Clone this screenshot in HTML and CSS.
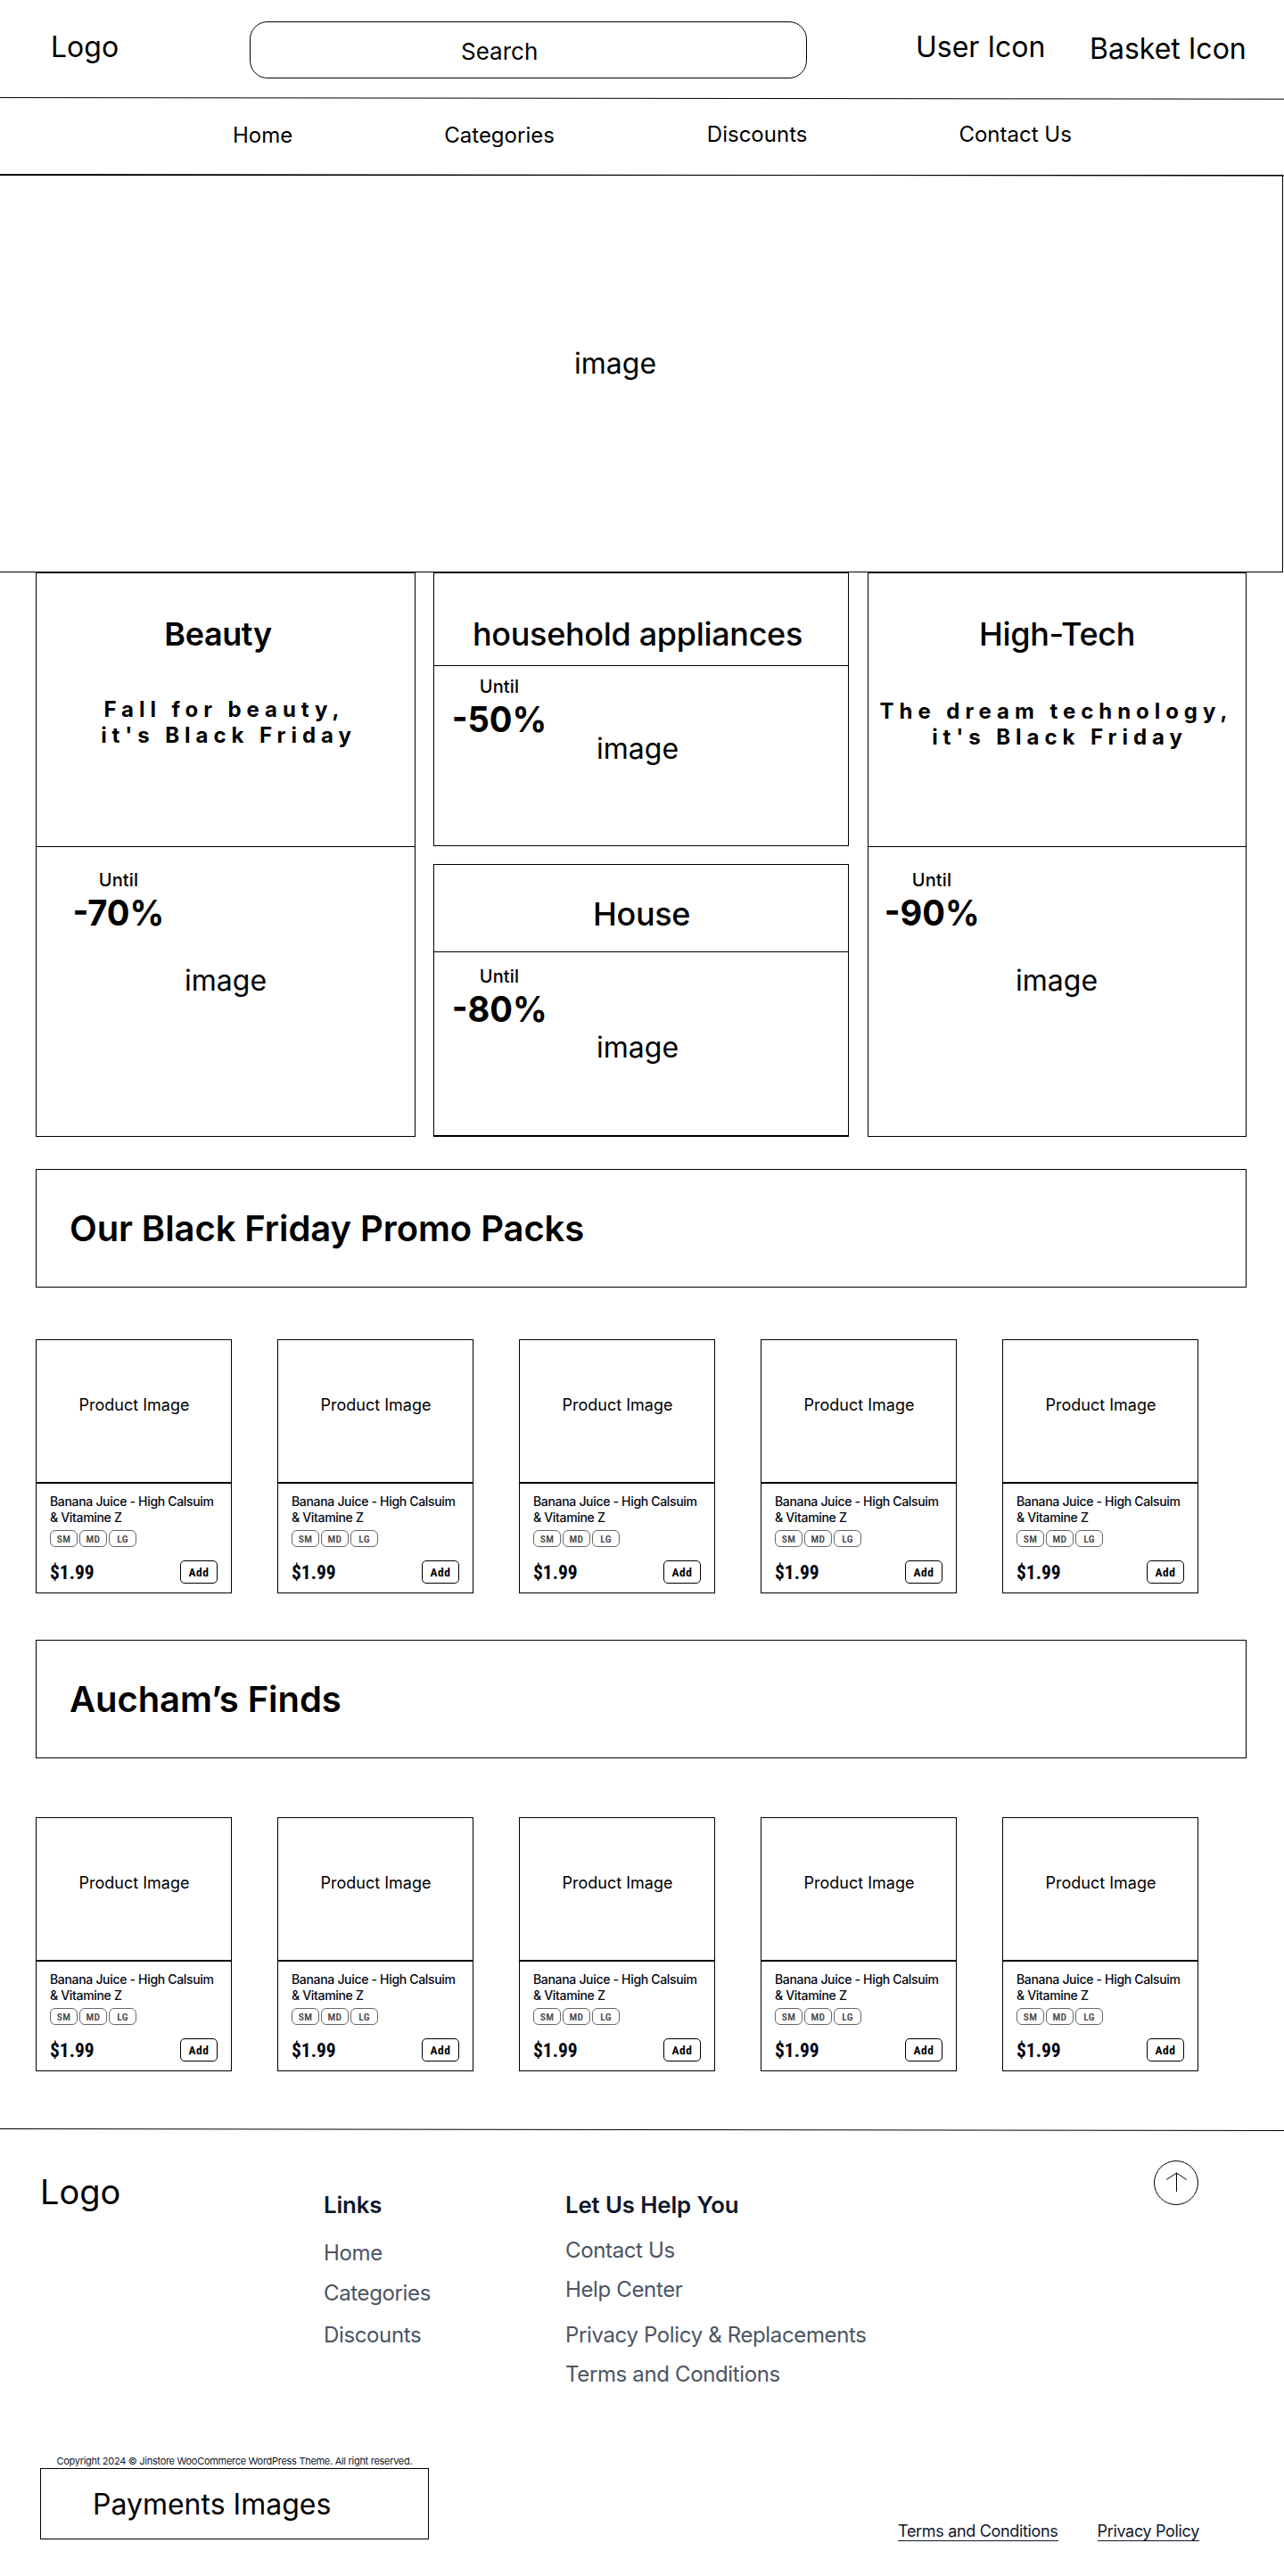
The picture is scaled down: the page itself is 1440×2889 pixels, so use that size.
FILE: index.html
```
<!DOCTYPE html>
<html lang="en">
<head>
<meta charset="utf-8">
<title>Black Friday Store</title>
<link rel="stylesheet" href="styles.css">
</head>
<body>
<header class="topbar">
  <div class="topbar-logo">Logo</div>
  <div class="search">Search</div>
  <div class="topbar-user">User Icon</div>
  <div class="topbar-basket">Basket Icon</div>
</header>
<svg class="rule" viewBox="0 0 1440 3" width="1440" height="3"><path d="M0 .5L1440 2.17" stroke="#000"/></svg>
<nav class="nav">
  <a class="nav-home">Home</a>
  <a class="nav-categories">Categories</a>
  <a class="nav-discounts">Discounts</a>
  <a class="nav-contact">Contact Us</a>
</nav>
<svg class="rule" viewBox="0 0 1440 3" width="1440" height="3"><path d="M0 .5L1440 2.1" stroke="#000"/></svg>
<section class="hero"><span>image</span></section>

<main class="main">
  <section class="promos">
    <article class="promo promo-side promo-beauty">
      <div class="promo-head">
        <h2 class="promo-title promo-title-bold">Beauty</h2>
        <p class="tagline"><span>Fall for beauty,</span><span>it's Black Friday</span></p>
      </div>
      <div class="promo-body">
        <div class="deal"><span class="until">Until</span><strong class="percent">-70%</strong></div>
        <span class="placeholder">image</span>
      </div>
    </article>
    <div class="promo-column">
      <article class="promo promo-appliances">
        <div class="promo-head"><h2 class="promo-title">household appliances</h2></div>
        <div class="promo-body">
          <div class="deal"><span class="until">Until</span><strong class="percent">-50%</strong></div>
          <span class="placeholder">image</span>
        </div>
      </article>
      <article class="promo promo-house">
        <div class="promo-head"><h2 class="promo-title">House</h2></div>
        <div class="promo-body">
          <div class="deal"><span class="until">Until</span><strong class="percent">-80%</strong></div>
          <span class="placeholder">image</span>
        </div>
      </article>
    </div>
    <article class="promo promo-side promo-tech">
      <div class="promo-head">
        <h2 class="promo-title">High-Tech</h2>
        <p class="tagline"><span>The dream technology,</span><span>it's Black Friday</span></p>
      </div>
      <div class="promo-body">
        <div class="deal"><span class="until">Until</span><strong class="percent">-90%</strong></div>
        <span class="placeholder">image</span>
      </div>
    </article>
  </section>

  <h2 class="section-title">Our Black Friday Promo Packs</h2>
  <section class="products products-packs">
    <article class="product"><div class="product-image">Product Image</div><div class="product-info"><h3 class="product-name">Banana Juice - High Calsuim<br>&amp; Vitamine Z</h3><div class="sizes"><span class="size">SM</span><span class="size">MD</span><span class="size">LG</span></div><div class="buy"><span class="price">$1.99</span><button class="add">Add</button></div></div></article>
    <article class="product"><div class="product-image">Product Image</div><div class="product-info"><h3 class="product-name">Banana Juice - High Calsuim<br>&amp; Vitamine Z</h3><div class="sizes"><span class="size">SM</span><span class="size">MD</span><span class="size">LG</span></div><div class="buy"><span class="price">$1.99</span><button class="add">Add</button></div></div></article>
    <article class="product"><div class="product-image">Product Image</div><div class="product-info"><h3 class="product-name">Banana Juice - High Calsuim<br>&amp; Vitamine Z</h3><div class="sizes"><span class="size">SM</span><span class="size">MD</span><span class="size">LG</span></div><div class="buy"><span class="price">$1.99</span><button class="add">Add</button></div></div></article>
    <article class="product"><div class="product-image">Product Image</div><div class="product-info"><h3 class="product-name">Banana Juice - High Calsuim<br>&amp; Vitamine Z</h3><div class="sizes"><span class="size">SM</span><span class="size">MD</span><span class="size">LG</span></div><div class="buy"><span class="price">$1.99</span><button class="add">Add</button></div></div></article>
    <article class="product"><div class="product-image">Product Image</div><div class="product-info"><h3 class="product-name">Banana Juice - High Calsuim<br>&amp; Vitamine Z</h3><div class="sizes"><span class="size">SM</span><span class="size">MD</span><span class="size">LG</span></div><div class="buy"><span class="price">$1.99</span><button class="add">Add</button></div></div></article>
  </section>

  <h2 class="section-title">Aucham’s Finds</h2>
  <section class="products products-finds">
    <article class="product"><div class="product-image">Product Image</div><div class="product-info"><h3 class="product-name">Banana Juice - High Calsuim<br>&amp; Vitamine Z</h3><div class="sizes"><span class="size">SM</span><span class="size">MD</span><span class="size">LG</span></div><div class="buy"><span class="price">$1.99</span><button class="add">Add</button></div></div></article>
    <article class="product"><div class="product-image">Product Image</div><div class="product-info"><h3 class="product-name">Banana Juice - High Calsuim<br>&amp; Vitamine Z</h3><div class="sizes"><span class="size">SM</span><span class="size">MD</span><span class="size">LG</span></div><div class="buy"><span class="price">$1.99</span><button class="add">Add</button></div></div></article>
    <article class="product"><div class="product-image">Product Image</div><div class="product-info"><h3 class="product-name">Banana Juice - High Calsuim<br>&amp; Vitamine Z</h3><div class="sizes"><span class="size">SM</span><span class="size">MD</span><span class="size">LG</span></div><div class="buy"><span class="price">$1.99</span><button class="add">Add</button></div></div></article>
    <article class="product"><div class="product-image">Product Image</div><div class="product-info"><h3 class="product-name">Banana Juice - High Calsuim<br>&amp; Vitamine Z</h3><div class="sizes"><span class="size">SM</span><span class="size">MD</span><span class="size">LG</span></div><div class="buy"><span class="price">$1.99</span><button class="add">Add</button></div></div></article>
    <article class="product"><div class="product-image">Product Image</div><div class="product-info"><h3 class="product-name">Banana Juice - High Calsuim<br>&amp; Vitamine Z</h3><div class="sizes"><span class="size">SM</span><span class="size">MD</span><span class="size">LG</span></div><div class="buy"><span class="price">$1.99</span><button class="add">Add</button></div></div></article>
  </section>
</main>

<svg class="rule" viewBox="0 0 1440 3" width="1440" height="3"><path d="M0 .5L1440 2.5" stroke="#000"/></svg>
<footer class="footer">
  <div class="footer-top">
    <div class="footer-logo">Logo</div>
    <div class="footer-col footer-links">
      <h4 class="footer-title">Links</h4>
      <a>Home</a><a>Categories</a><a>Discounts</a>
    </div>
    <div class="footer-col footer-help">
      <h4 class="footer-title">Let Us Help You</h4>
      <a>Contact Us</a><a>Help Center</a><a>Privacy Policy &amp; Replacements</a><a>Terms and Conditions</a>
    </div>
    <svg class="to-top" viewBox="0 0 50 50" width="50" height="50" fill="none" stroke="#000"><circle cx="25" cy="25" r="24.5"/><path d="M25.5 35V14M14.2 21.5L25.5 14L36.8 21.5"/></svg>
  </div>
  <div class="footer-bottom">
    <div class="footer-legal">
      <p class="copyright">Copyright 2024 © Jinstore WooCommerce WordPress Theme. All right reserved.</p>
      <div class="payments">Payments Images</div>
    </div>
    <div class="policy-links"><a>Terms and Conditions</a><a>Privacy Policy</a></div>
  </div>
</footer>
</body>
</html>
```
FILE: styles.css
```
* { box-sizing: border-box; }
body { margin: 0; width: 1440px; background: #fff; color: #000; font: 400 32px/39px Inter, "Liberation Sans", sans-serif; }
h2, h3, h4, p { margin: 0; font-weight: inherit; }
.rule { display: block; }

/* Header */
.topbar { display: grid; grid-template-columns: 223px 625px 195px auto; align-items: start; height: 109px; padding: 24px 0 0 57px; }
.topbar-logo, .topbar-user { padding-top: 9px; }
.topbar-user { padding-left: 122px; white-space: nowrap; }
.topbar-basket { padding: 11px 0 0 122px; white-space: nowrap; }
.search { height: 64px; border: 1px solid #000; border-radius: 20px; font-size: 26px; line-height: 31px; padding: 17px 0 0 236px; }
.nav { display: flex; height: 83px; padding: 24px 0 0 261px; font-size: 24px; line-height: 29px; }
.nav a { margin-top: 1px; }
.nav-categories { margin-left: 170px; }
.nav a.nav-discounts { margin: 0 0 0 171px; }
.nav a.nav-contact { margin: 0 0 0 170px; }
.hero { width: 1439px; height: 446px; margin-top: -2px; border: 1px solid #000; border-left: 0; padding: 191px 0 0 644px; }

/* Promo tiles */
.main { padding: 0 42px 0 40px; }
.promos { display: flex; gap: 20px; height: 633px; }
.promo { border: 1px solid #000; display: flex; flex-direction: column; }
.promo-head { border-bottom: 1px solid #000; }
.promo-beauty { width: 426px; }
.promo-tech { width: 425px; margin-left: 1px; }
.promo-column { width: 466px; display: flex; flex-direction: column; gap: 20px; }
.promo-title { font-size: 36px; line-height: 43px; font-weight: 500; letter-spacing: -0.32px; }
.promo-title-bold { font-weight: 600; letter-spacing: -0.4px; }
.promo-side .promo-head { height: 307px; padding-top: 47px; }
.promo-side .promo-title { text-align: center; }
.promo-beauty .promo-title { padding-right: 17px; }
.tagline { font-size: 24px; line-height: 29px; font-weight: 700; letter-spacing: 5.95px; text-align: center; white-space: nowrap; padding-top: 48px; }
.tagline span { display: block; }
.promo-beauty .tagline span:first-child { padding-right: 3px; }
.promo-beauty .tagline span:last-child { padding-left: 7px; }
.promo-tech .tagline { padding: 50px 2px 0 0; }
.promo-tech .tagline span:last-child { padding-left: 8px; }
.promo-body { display: flex; align-items: flex-start; }
.deal { display: flex; flex-direction: column; align-items: center; width: 108px; }
.until { font-size: 20px; line-height: 24px; font-weight: 500; letter-spacing: 0.2px; }
.percent { margin-top: 1px; font-size: 40px; line-height: 48px; font-weight: 700; transform: scaleX(0.953); }
.promo-side .deal { margin: 25px 0 0 38px; }
.promo-tech .deal { margin-left: 17px; }
.promo-side .placeholder { margin: 130px 0 0 20px; }
.promo-tech .placeholder { margin-left: 40px; }
.promo-appliances { height: 307px; }
.promo-appliances .promo-head { height: 104px; padding: 47px 0 0 43px; }
.promo-appliances .deal { margin: 11px 0 0 19px; }
.promo-appliances .placeholder { margin: 73px 0 0 55px; }
.promo-house { height: 306px; border-bottom-width: 2px; }
.promo-house .promo-head { height: 98px; padding: 34px 0 0 178px; }
.promo-house .deal { margin: 15px 0 0 19px; }
.promo-house .placeholder { margin: 87px 0 0 55px; }

/* Product rows */
.section-title { height: 133px; margin-top: 36px; border: 1px solid #000; padding: 42px 0 0 37px; font-size: 40px; line-height: 48px; font-weight: 600; letter-spacing: -0.08px; }
.products { display: flex; gap: 51px; }
.products-packs { margin: 58px 0 52px; }
.products-packs + .section-title { margin-top: 0; }
.products-finds { margin: 66px 0 64px; }
.product { width: 220px; height: 285px; border: 1px solid #000; }
.product-image { height: 161px; border-bottom: 2px solid #000; font-size: 18px; line-height: 22px; padding: 62px 0 0 1px; text-align: center; }
.product-info { padding: 11px 15px 0; }
.product-name { font-size: 14px; line-height: 18px; font-weight: 500; letter-spacing: -0.32px; color: #030712; white-space: nowrap; }
.sizes { display: flex; gap: 2px; margin-top: 5px; }
.size { width: 31px; height: 19px; border: 1px solid #666; border-radius: 6px; color: #4b4b4b; font: 600 11.5px/18px "Roboto Condensed", Roboto, sans-serif; letter-spacing: 0.3px; text-align: center; }
.buy { display: flex; justify-content: space-between; margin-top: 15px; }
.price { color: #030712; font: 700 21.5px/28px "Roboto Condensed", Roboto, sans-serif; }
.add { width: 42px; height: 26px; padding: 0; border: 1px solid #000; border-radius: 5px; background: #fff; color: #000; font: 700 13.5px/24px "Roboto Condensed", Roboto, sans-serif; letter-spacing: 0.6px; }

/* Footer */
.footer { height: 499px; }
.footer-top { display: flex; align-items: flex-start; height: 358px; padding: 33px 0 0 45px; }
.footer-logo { width: 318px; padding-top: 12px; font-size: 38px; line-height: 46px; }
.footer-col { display: flex; flex-direction: column; padding-top: 34px; color: #4b5563; font-size: 24px; line-height: 29px; letter-spacing: -0.36px; white-space: nowrap; }
.footer-title { color: #0f172a; font-size: 25.75px; line-height: 31px; font-weight: 600; letter-spacing: -0.1px; margin-bottom: 24px; }
.footer-links { width: 271px; }
.footer-links a { margin-bottom: 16px; }
.footer-links a:last-child { margin-top: 2px; }
.footer-help { width: 660px; }
.footer-help .footer-title { margin-bottom: 21px; }
.footer-help a { margin-bottom: 15px; }
.footer-help a:nth-of-type(2) { margin-bottom: 22px; }
.to-top { display: block; }
.footer-bottom { display: flex; justify-content: space-between; padding: 5px 95px 0 45px; color: #0f172a; }
.copyright { padding-left: 18.5px; font-size: 11px; line-height: 15px; letter-spacing: -0.29px; }
.payments { width: 436px; height: 80px; border: 1px solid #000; padding: 20px 0 0 58px; color: #000; }
.policy-links { display: flex; gap: 44px; padding-top: 75px; font-size: 18px; line-height: 22px; letter-spacing: -0.33px; }
.policy-links a { height: 22px; border-bottom: 1px solid #0f172a; }
```
